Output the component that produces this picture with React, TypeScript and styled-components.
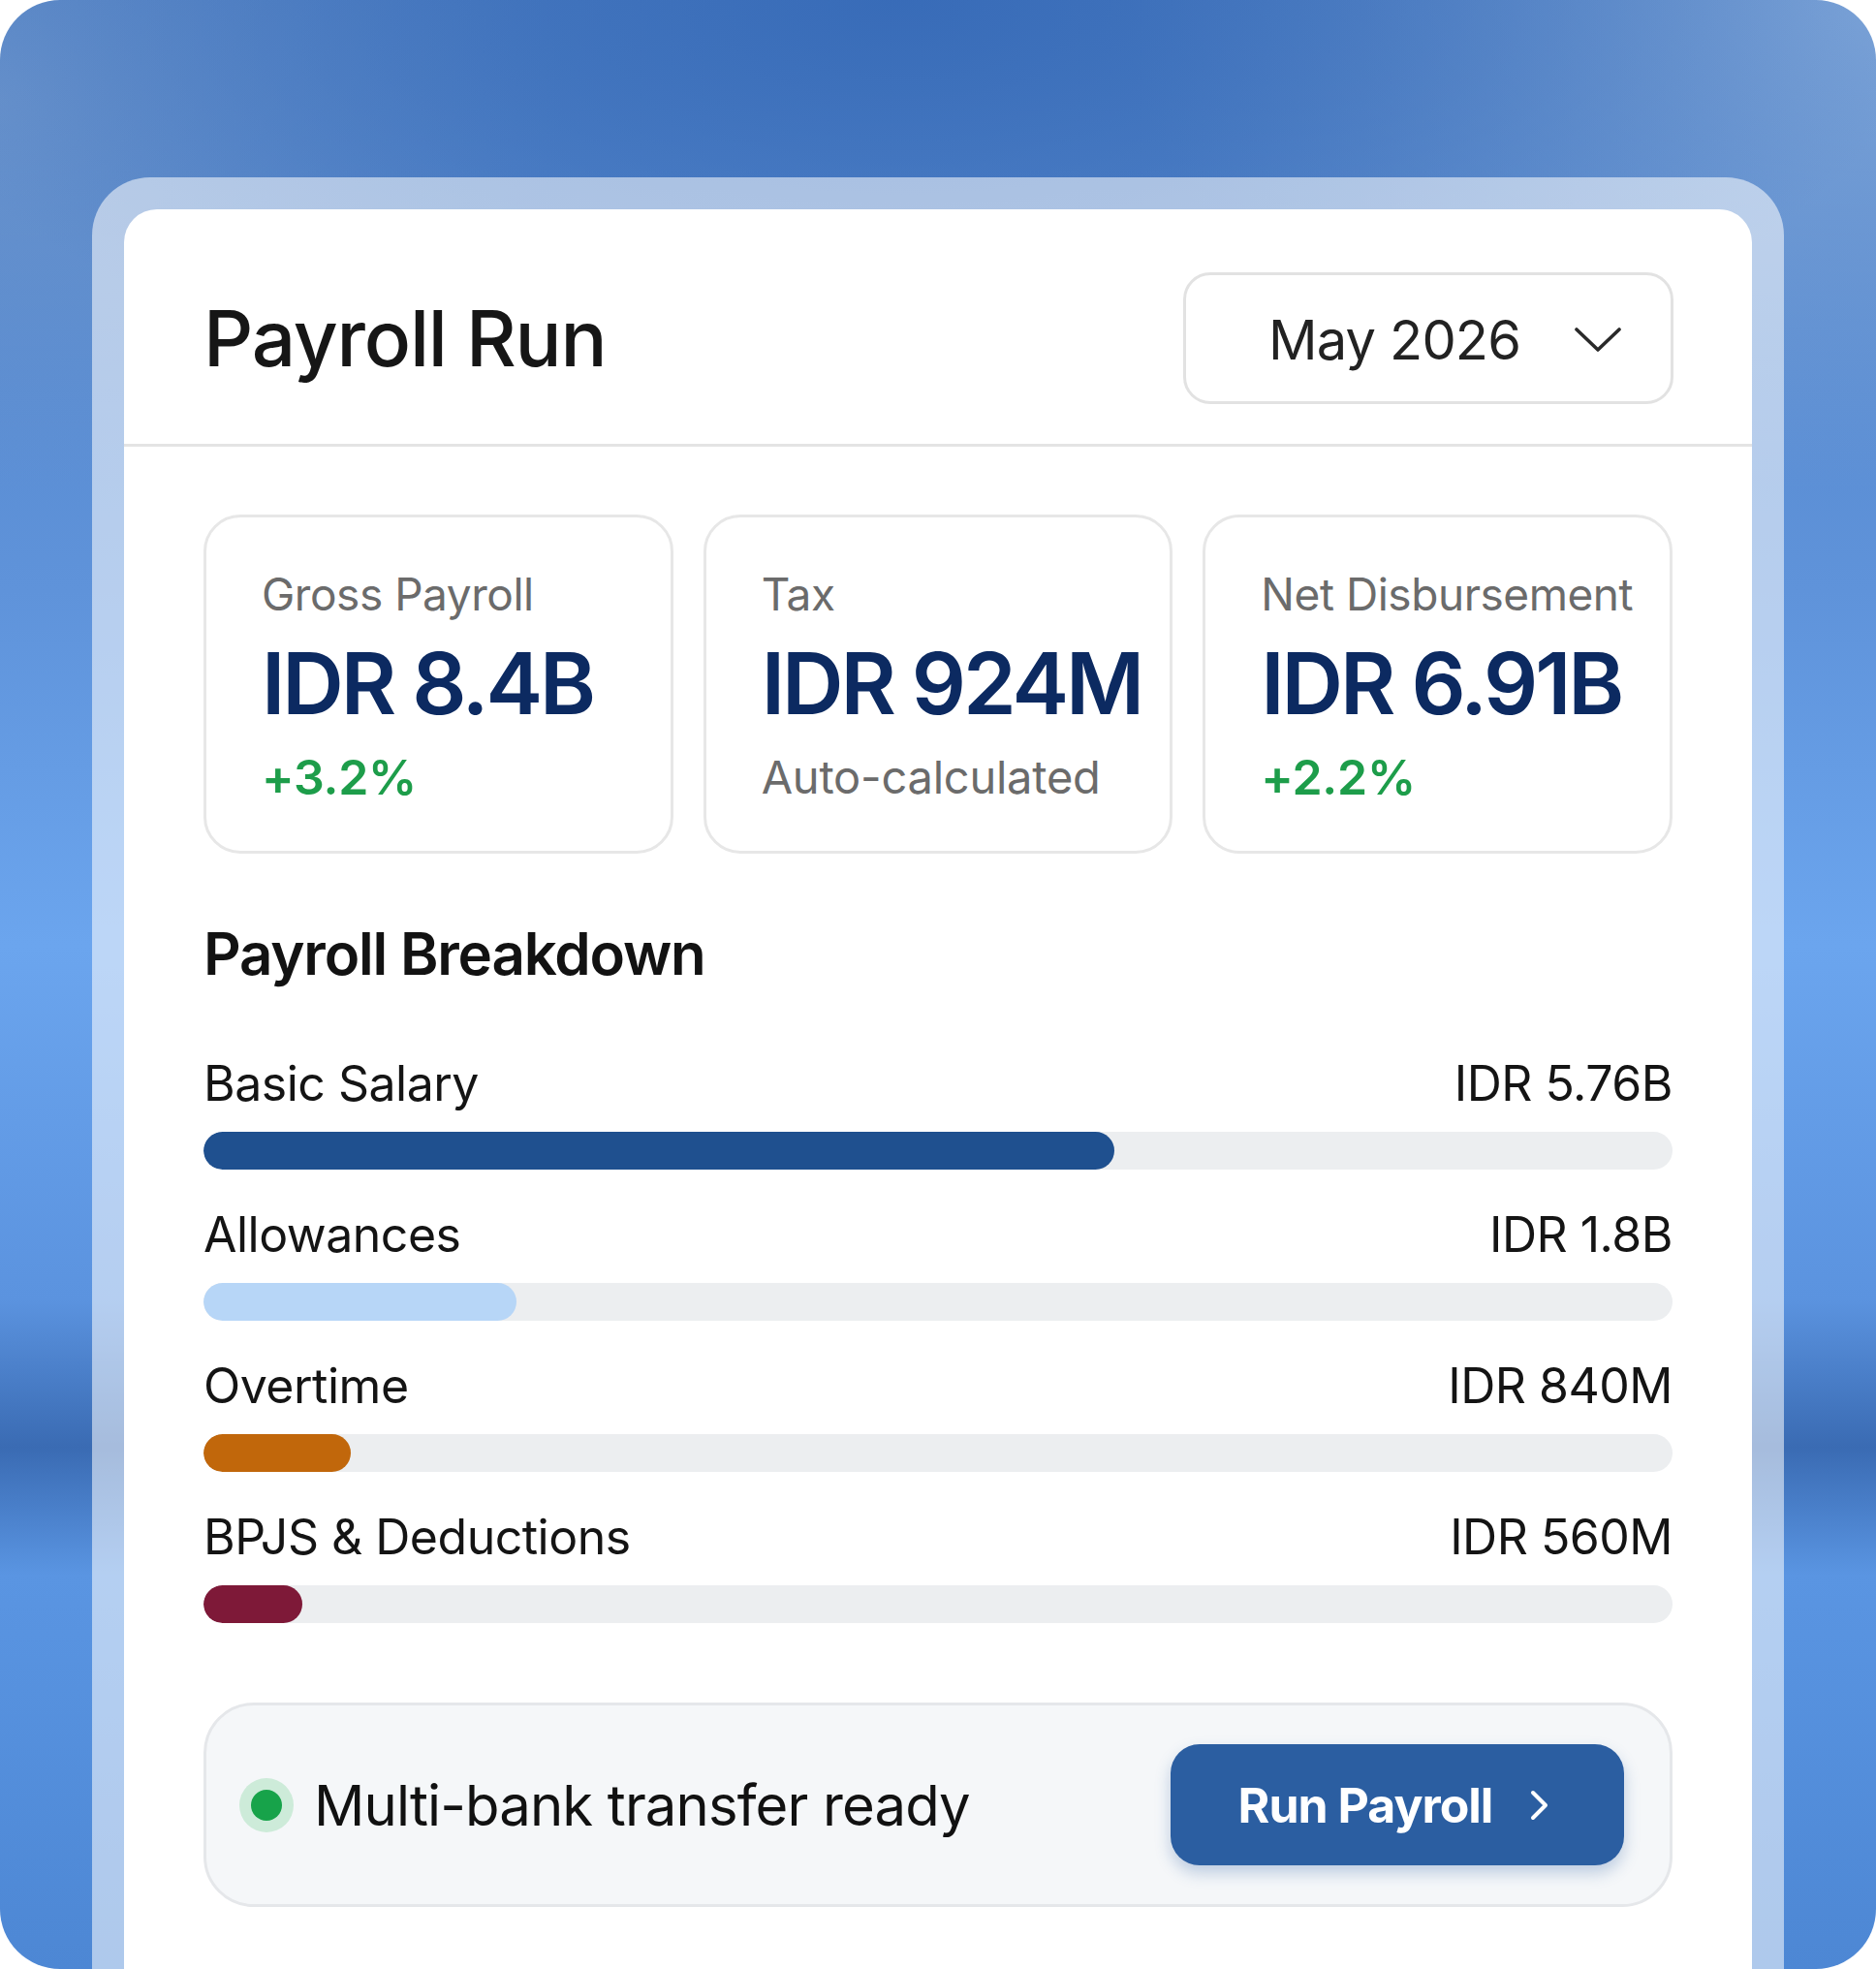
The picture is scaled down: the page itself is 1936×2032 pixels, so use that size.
import styled, { createGlobalStyle } from "styled-components";

const GlobalStyle = createGlobalStyle`
  html, body {
    margin: 0;
    padding: 0;
    background: #ffffff;
  }
  body {
    font-family: "Inter", "Noto Sans", "Liberation Sans", sans-serif;
    -webkit-font-smoothing: antialiased;
  }
  * {
    box-sizing: border-box;
  }
`;

const Backdrop = styled.div`
  width: 1936px;
  height: 2032px;
  border-radius: 62px;
  overflow: hidden;
  padding: 183px 95px 0;
  display: flex;
  flex-direction: column;
  background:
    radial-gradient(ellipse 55% 22% at 48% 0%, rgba(52, 104, 182, 0.85) 0%, rgba(52, 104, 182, 0) 100%),
    radial-gradient(ellipse 40% 25% at 100% 0%, rgba(130, 168, 218, 0.9) 0%, rgba(130, 168, 218, 0) 100%),
    radial-gradient(ellipse 30% 20% at 0% 5%, rgba(110, 150, 205, 0.8) 0%, rgba(110, 150, 205, 0) 100%),
    linear-gradient(
      180deg,
      #4f80c4 0%,
      #5f93da 30%,
      #6ba5ee 48%,
      #5b93df 66%,
      #3a6bb3 73.5%,
      #5a95e2 80%,
      #4d87d4 100%
    );
`;

const Frame = styled.div`
  flex: 1;
  display: flex;
  flex-direction: column;
  padding: 33px 33px 0;
  border-radius: 60px 60px 0 0;
  background: rgba(255, 255, 255, 0.55);
`;

const Card = styled.div`
  flex: 1;
  background: #ffffff;
  border-radius: 34px 34px 0 0;
  display: flex;
  flex-direction: column;
`;

const Header = styled.div`
  display: flex;
  align-items: center;
  justify-content: space-between;
  padding: 65px 81px 41px 82px;
  border-bottom: 3px solid #e4e4e4;
`;

const Title = styled.h1`
  margin: 0;
  font-size: 80px;
  line-height: 1.2;
  font-weight: 500;
  color: #161616;
  letter-spacing: -0.015em;
`;

const MonthSelect = styled.div`
  width: 506px;
  height: 136px;
  border: 3px solid #e2e2e2;
  border-radius: 28px;
  display: flex;
  align-items: center;
  padding: 4px 0 0 85px;
  gap: 56px;
  font-size: 56px;
  font-weight: 400;
  color: #222222;
  letter-spacing: -0.015em;
`;

const Body = styled.div`
  display: flex;
  flex-direction: column;
  padding: 70px 82px 80px;
`;

const StatGrid = styled.div`
  display: grid;
  grid-template-columns: repeat(3, 1fr);
  gap: 31px;
`;

const StatCard = styled.div`
  height: 350px;
  border: 3px solid #e7e7e7;
  border-radius: 38px;
  padding: 51px 20px 0 57px;
  display: flex;
  flex-direction: column;
`;

const StatLabel = styled.div`
  font-size: 46px;
  line-height: 56px;
  color: #6b6b6b;
  letter-spacing: -0.01em;
  white-space: nowrap;
`;

const StatValue = styled.div`
  margin-top: 16px;
  font-size: 88px;
  line-height: 97px;
  font-weight: 600;
  color: #0c2a61;
  letter-spacing: -0.035em;
  white-space: nowrap;
`;

const StatNote = styled.div<{ $tone: "up" | "muted" }>`
  margin-top: 18px;
  font-size: ${(p) => (p.$tone === "up" ? "50px" : "47px")};
  line-height: 60px;
  font-weight: ${(p) => (p.$tone === "up" ? 600 : 400)};
  color: ${(p) => (p.$tone === "up" ? "#1d9d4a" : "#6b6b6b")};
  letter-spacing: -0.005em;
`;

const SectionTitle = styled.h2`
  margin: 67px 0 0;
  font-size: 60px;
  line-height: 72px;
  font-weight: 600;
  color: #121212;
  letter-spacing: -0.02em;
`;

const Rows = styled.div`
  margin-top: 68px;
  display: flex;
  flex-direction: column;
  gap: 37px;
`;

const Row = styled.div`
  display: flex;
  flex-direction: column;
  gap: 20px;
`;

const RowHead = styled.div`
  display: flex;
  justify-content: space-between;
  align-items: baseline;
  font-size: 50px;
  line-height: 60px;
  color: #141414;
  letter-spacing: -0.01em;
`;

const Track = styled.div`
  height: 39px;
  border-radius: 20px;
  background: #eceef0;
  overflow: hidden;
`;

const Fill = styled.div<{ $color: string }>`
  height: 100%;
  border-radius: 20px;
  background: ${(p) => p.$color};
`;

const Footer = styled.div`
  margin-top: 82px;
  height: 211px;
  border: 3px solid #e5e7ea;
  border-radius: 52px;
  background: #f5f7f9;
  display: flex;
  align-items: center;
  justify-content: space-between;
  padding: 0 47px 0 34px;
`;

const Status = styled.div`
  display: flex;
  align-items: center;
  gap: 21px;
  font-size: 58px;
  color: #111111;
  letter-spacing: -0.015em;
`;

const Dot = styled.span`
  width: 56px;
  height: 56px;
  border-radius: 50%;
  background: #cdebd9;
  display: flex;
  align-items: center;
  justify-content: center;

  &::after {
    content: "";
    width: 32px;
    height: 32px;
    border-radius: 50%;
    background: #17a34a;
  }
`;

const RunButton = styled.button`
  width: 468px;
  height: 125px;
  border: none;
  border-radius: 30px;
  background: #2b5ea1;
  box-shadow: 0 8px 16px rgba(43, 94, 161, 0.28);
  color: #ffffff;
  font-family: inherit;
  font-size: 50px;
  font-weight: 700;
  letter-spacing: -0.02em;
  display: flex;
  align-items: center;
  justify-content: center;
  gap: 38px;
  padding: 0 6px 0 0;
  cursor: pointer;
`;

const stats = [
  { label: "Gross Payroll", value: "IDR 8.4B", note: "+3.2%", tone: "up" as const },
  { label: "Tax", value: "IDR 924M", note: "Auto-calculated", tone: "muted" as const },
  { label: "Net Disbursement", value: "IDR 6.91B", note: "+2.2%", tone: "up" as const },
];

const breakdown = [
  { name: "Basic Salary", amount: "IDR 5.76B", pct: 62, color: "#1f508f" },
  { name: "Allowances", amount: "IDR 1.8B", pct: 21.3, color: "#b7d6f7" },
  { name: "Overtime", amount: "IDR 840M", pct: 10, color: "#c1670b" },
  { name: "BPJS & Deductions", amount: "IDR 560M", pct: 6.7, color: "#7e1938" },
];

const App = () => {
  return (
    <>
      <GlobalStyle />
      <Backdrop>
        <Frame>
          <Card>
            <Header>
              <Title>Payroll Run</Title>
              <MonthSelect>
                <span>May 2026</span>
                <svg width="48" height="26" viewBox="0 0 48 26" fill="none">
                  <path
                    d="M2 2L24 23L46 2"
                    stroke="#2a2a2a"
                    strokeWidth="3.6"
                    strokeLinecap="round"
                    strokeLinejoin="round"
                  />
                </svg>
              </MonthSelect>
            </Header>
            <Body>
              <StatGrid>
                {stats.map((s) => (
                  <StatCard key={s.label}>
                    <StatLabel>{s.label}</StatLabel>
                    <StatValue>{s.value}</StatValue>
                    <StatNote $tone={s.tone}>{s.note}</StatNote>
                  </StatCard>
                ))}
              </StatGrid>

              <SectionTitle>Payroll Breakdown</SectionTitle>
              <Rows>
                {breakdown.map((b) => (
                  <Row key={b.name}>
                    <RowHead>
                      <span>{b.name}</span>
                      <span>{b.amount}</span>
                    </RowHead>
                    <Track>
                      <Fill $color={b.color} style={{ width: `${b.pct}%` }} />
                    </Track>
                  </Row>
                ))}
              </Rows>

              <Footer>
                <Status>
                  <Dot />
                  Multi-bank transfer ready
                </Status>
                <RunButton>
                  Run Payroll
                  <svg width="22" height="34" viewBox="0 0 22 34" fill="none">
                    <path
                      d="M4 4L17 17L4 30"
                      stroke="#ffffff"
                      strokeWidth="4"
                      strokeLinecap="round"
                      strokeLinejoin="round"
                    />
                  </svg>
                </RunButton>
              </Footer>
            </Body>
          </Card>
        </Frame>
      </Backdrop>
    </>
  );
};

export default App;
